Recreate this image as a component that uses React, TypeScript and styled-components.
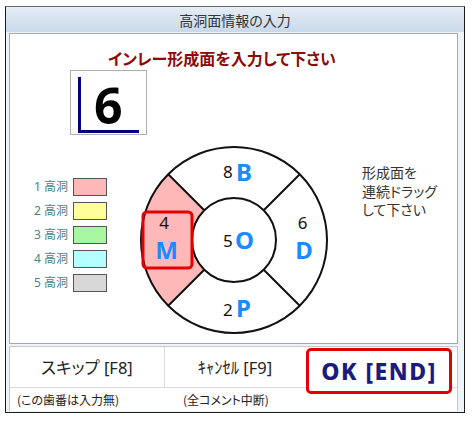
import React from "react";
import styled, { createGlobalStyle } from "styled-components";

const GlobalStyle = createGlobalStyle`
  body {
    margin: 0;
    background: #ffffff;
    font-family: "Noto Sans", "Noto Sans CJK JP", sans-serif;
    font-feature-settings: "palt";
  }
`

const Window = styled.div`
  box-sizing: border-box;
  margin: 6px 0 0 5px;
  width: 460px;
  height: 407px;
  border: 1px solid #1a1a1a;
  border-top-color: #6a6a6a;
  background: #eef3f8;
  display: flex;
  flex-direction: column;
`

const TitleBar = styled.div`
  height: 25px;
  display: flex;
  align-items: center;
  justify-content: center;
  background: linear-gradient(#e6edf5, #c9d9ea);
  color: #333;
  font-size: 14px;
  font-family: "Noto Sans CJK JP", sans-serif;
`

const MainPanel = styled.div`
  box-sizing: border-box;
  margin: 1px 0 0 3px;
  width: 449px;
  height: 311px;
  border: 1px solid #a8a8a8;
  background: #fff;
  display: flex;
  flex-direction: column;
`

const Heading = styled.div`
  margin-top: 14px;
  padding-left: 98px;
  line-height: 20px;
  font-size: 16px;
  font-weight: bold;
  color: #8b0a0a;
  font-family: "Noto Sans CJK JP", sans-serif;
`

const ToothBox = styled.div`
  box-sizing: border-box;
  margin: 2px 0 0 60px;
  width: 77px;
  height: 65px;
  border: 1px solid #b0b0b0;
  padding: 6px 0 0 7px;
`

const ToothMark = styled.div`
  box-sizing: border-box;
  width: 61px;
  height: 56px;
  border-left: 3px solid #000080;
  border-bottom: 3px solid #000080;
  display: flex;
  align-items: flex-end;
  padding-left: 13px;
  font-family: "Open Sans", sans-serif;
  font-weight: 700;
  font-size: 50px;
  line-height: 50px;
  color: #000;
`

const BodyRow = styled.div`
  margin-top: 8px;
  display: flex;
  align-items: flex-start;
`

const Legend = styled.div`
  margin-left: 24px;
  padding-top: 35px;
  display: flex;
  flex-direction: column;
  gap: 6px;
`

const LegendRow = styled.div`
  display: flex;
  align-items: center;
  gap: 5px;
`

const LegendLabel = styled.span`
  width: 34px;
  font-size: 12px;
  line-height: 18px;
  color: #4f7f86;
  white-space: nowrap;
`

const Swatch = styled.span<{ fill: string }>`
  box-sizing: border-box;
  width: 34px;
  height: 18px;
  border: 1px solid #555;
  background: ${props => props.fill};
`

const Wheel = styled.svg`
  margin-left: 32px;
  flex: none;
`

const Note = styled.div`
  margin-left: 31px;
  padding-top: 20px;
  font-size: 14px;
  line-height: 18.5px;
  color: #333;
  font-family: "Noto Sans CJK JP", sans-serif;
`

const BottomPanel = styled.div`
  box-sizing: border-box;
  margin: 2px 0 0 3px;
  width: 449px;
  height: 65px;
  border: 1px solid #c8c8c8;
  border-bottom: none;
  background: #fff;
`

const ButtonRow = styled.div`
  height: 40px;
  border-bottom: 1px solid #dcdcdc;
  display: grid;
  grid-template-columns: 155px 140px 1fr;
  align-items: start;
`

const KeyButton = styled.div<{ divider?: boolean }>`
  height: 40px;
  display: flex;
  align-items: center;
  justify-content: center;
  border-right: ${props => props.divider ? "1px solid #dcdcdc" : "none"};
  font-size: 16.5px;
  color: #222;
`

const OkButton = styled.div`
  position: relative;
  z-index: 1;
  box-sizing: border-box;
  margin: 1px 0 0 1px;
  width: 146px;
  height: 46px;
  border: 3px solid #e40000;
  border-radius: 5px;
  background: #fff;
  display: flex;
  align-items: center;
  justify-content: center;
  font-size: 23px;
  font-weight: 800;
  letter-spacing: 1.5px;
  color: #1b1b7d;
`

const CommentRow = styled.div`
  display: grid;
  grid-template-columns: 155px 140px 1fr;
  height: 22px;
  align-items: center;
  font-size: 12px;
  color: #222;
  font-family: "Noto Sans CJK JP", sans-serif;
`

const Comment = styled.span<{ indent: number }>`
  padding-left: ${props => props.indent}px;
  white-space: nowrap;
`

const legend = [
  { label: "1 高洞", fill: "#ffb8b8" },
  { label: "2 高洞", fill: "#ffff99" },
  { label: "3 高洞", fill: "#a6f7a0" },
  { label: "4 高洞", fill: "#b4ffff" },
  { label: "5 高洞", fill: "#d8d8d8" },
]

const BLUE = "#1a8cff"

const num = { fontFamily: "Noto Sans, sans-serif", fontSize: 17, fill: "#111" }
const letter = { fontFamily: "Noto Sans, sans-serif", fontSize: 24, fontWeight: 700, fill: BLUE }

const SurfaceWheel = () => {
  const cx = 95
  const cy = 97
  const R = 93
  const r = 42
  const k = Math.SQRT1_2
  const o = R * k
  const i = r * k
  const sector = `M ${cx - o} ${cy - o} A ${R} ${R} 0 0 0 ${cx - o} ${cy + o} L ${cx - i} ${cy + i} A ${r} ${r} 0 0 1 ${cx - i} ${cy - i} Z`
  return (
    <Wheel width="192" height="194" viewBox="0 0 192 194">
      <path d={sector} fill="#ffb8b8" />
      <circle cx={cx} cy={cy} r={R} fill="none" stroke="#111" strokeWidth="2" />
      <circle cx={cx} cy={cy} r={r} fill="#fff" stroke="#111" strokeWidth="2" />
      {[[-1, -1], [1, -1], [1, 1], [-1, 1]].map(([sx, sy], n) => (
        <line key={n} x1={cx + sx * i} y1={cy + sy * i} x2={cx + sx * o} y2={cy + sy * o} stroke="#111" strokeWidth="2" />
      ))}
      <text x="84" y="35" style={num}>8</text>
      <text x="97" y="38" style={letter}>B</text>
      <text x="84" y="104" style={num}>5</text>
      <text x="96" y="106" style={letter}>O</text>
      <text x="84" y="173" style={num}>2</text>
      <text x="97" y="174" style={letter}>P</text>
      <text x="163.5" y="86" textAnchor="middle" style={num}>6</text>
      <text x="165" y="116" textAnchor="middle" style={letter}>D</text>
      <text x="25" y="86" textAnchor="middle" style={num}>4</text>
      <text x="27.5" y="116" textAnchor="middle" style={letter}>M</text>
      <rect x="4" y="69" width="49" height="56" rx="4" fill="none" stroke="#e40000" strokeWidth="3" />
    </Wheel>
  )
}

export default function App() {
  return (
    <>
      <GlobalStyle />
      <Window>
        <TitleBar>高洞面情報の入力</TitleBar>
        <MainPanel>
          <Heading>インレー形成面を入力して下さい</Heading>
          <ToothBox>
            <ToothMark>6</ToothMark>
          </ToothBox>
          <BodyRow>
            <Legend>
              {legend.map(item => (
                <LegendRow key={item.label}>
                  <LegendLabel>{item.label}</LegendLabel>
                  <Swatch fill={item.fill} />
                </LegendRow>
              ))}
            </Legend>
            <SurfaceWheel />
            <Note>
              形成面を<br />
              連続ドラッグ<br />
              して下さい
            </Note>
          </BodyRow>
        </MainPanel>
        <BottomPanel>
          <ButtonRow>
            <KeyButton divider>スキップ [F8]</KeyButton>
            <KeyButton>ｷｬﾝｾﾙ [F9]</KeyButton>
            <OkButton>OK [END]</OkButton>
          </ButtonRow>
          <CommentRow>
            <Comment indent={7}>(この歯番は入力無)</Comment>
            <Comment indent={18}>(全コメント中断)</Comment>
          </CommentRow>
        </BottomPanel>
      </Window>
    </>
  )
}
